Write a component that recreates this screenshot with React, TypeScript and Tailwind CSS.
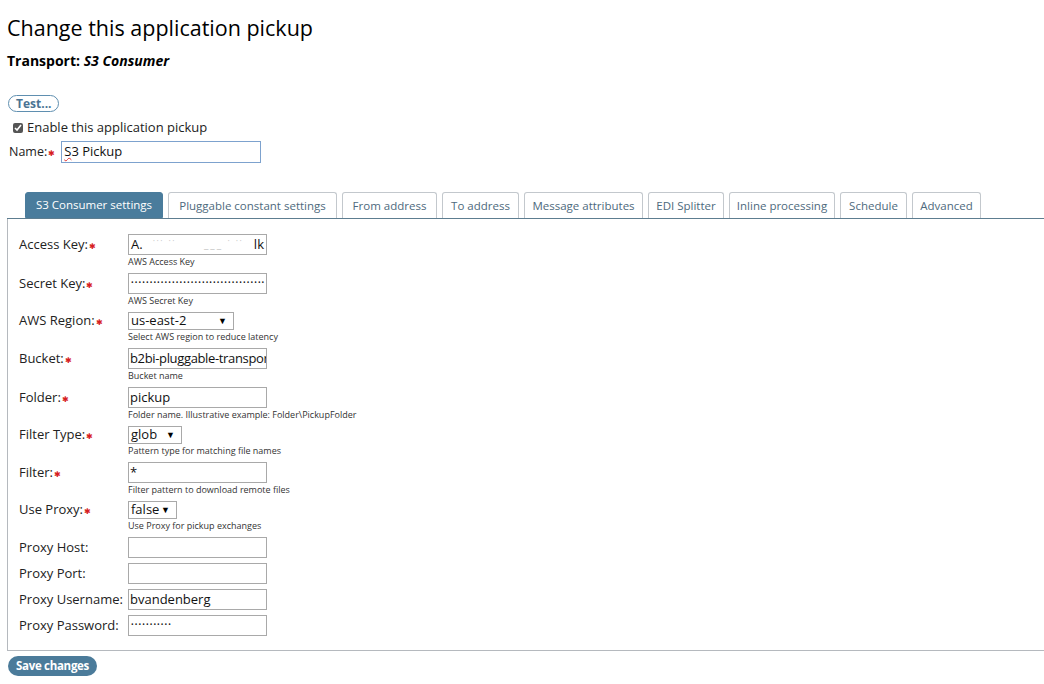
import React from "react";

const tabs: [string, string][] = [
  ["S3 Consumer settings", "w-[138px]"],
  ["Pluggable constant settings", "w-[169px]"],
  ["From address", "w-[95px]"],
  ["To address", "w-[77px]"],
  ["Message attributes", "w-[119px]"],
  ["EDI Splitter", "w-[76px]"],
  ["Inline processing", "w-[106px]"],
  ["Schedule", "w-[67px]"],
  ["Advanced", "w-[69px]"],
];

type Field = {
  label: string;
  required?: boolean;
  kind: "text" | "password" | "select" | "redacted";
  value?: string;
  width?: string;
  hint?: string;
  tight?: boolean;
};

const fields: Field[] = [
  { label: "Access Key:", required: true, kind: "redacted", hint: "AWS Access Key" },
  { label: "Secret Key:", required: true, kind: "password", value: "•".repeat(36), hint: "AWS Secret Key" },
  { label: "AWS Region:", required: true, kind: "select", value: "us-east-2", width: "w-[106px]", hint: "Select AWS region to reduce latency" },
  { label: "Bucket:", required: true, kind: "text", value: "b2bi-pluggable-transport", hint: "Bucket name", tight: true },
  { label: "Folder:", required: true, kind: "text", value: "pickup", hint: "Folder name. Illustrative example: Folder\\PickupFolder" },
  { label: "Filter Type:", required: true, kind: "select", value: "glob", width: "w-[54px]", hint: "Pattern type for matching file names" },
  { label: "Filter:", required: true, kind: "text", value: "*", hint: "Filter pattern to download remote files" },
  { label: "Use Proxy:", required: true, kind: "select", value: "false", width: "w-[49px]", hint: "Use Proxy for pickup exchanges" },
  { label: "Proxy Host:", kind: "text", value: "" },
  { label: "Proxy Port:", kind: "text", value: "" },
  { label: "Proxy Username:", kind: "text", value: "bvandenberg" },
  { label: "Proxy Password:", kind: "password", value: "•".repeat(11) },
];

function Req() {
  return <span className="ml-[1px] text-[8px] leading-none text-[#d62020] relative top-[1px]">✱</span>;
}

const box = "h-[21px] border border-[#a9a9a9] bg-white flex items-center overflow-hidden whitespace-nowrap";

function Control({ f }: { f: Field }) {
  if (f.kind === "select") {
    return (
      <div className={`${f.width} h-[18px] border border-[#a9a9a9] bg-white flex items-center justify-between pl-[2px] pr-[6px] text-[13px] text-[#111]`}>
        <span>{f.value}</span>
        <span className="text-[9px] text-black">▼</span>
      </div>
    );
  }
  if (f.kind === "redacted") {
    return (
      <div className={`w-[139px] ${box} justify-between px-[2px] text-[13px] text-[#111]`}>
        <span>A.</span>
        <span className="text-[#c4c4c4] text-[10px] tracking-[2px]">˙˙˙ ˙˙ &nbsp;&nbsp;&nbsp;&nbsp; ___ ˙ ˙˙</span>
        <span>lk</span>
      </div>
    );
  }
  if (f.kind === "password") {
    return (
      <div className={`w-[139px] ${box} px-[2px]`}>
        <span className="text-[7px] tracking-[1.1px] text-[#222]">{f.value}</span>
      </div>
    );
  }
  return (
    <div className={`w-[139px] ${box} px-[1px] text-[13px] text-[#111] ${f.tight ? "tracking-[-0.35px]" : ""}`}>
      {f.value}
    </div>
  );
}

export default function App() {
  return (
    <div className="w-[1044px] h-[684px] overflow-hidden bg-white text-[#222] font-['Open_Sans',sans-serif]">
      <div className="pl-[7px] pt-[12px]">
        <h1 className="text-[21.5px] leading-[32px] text-black whitespace-nowrap">Change this application pickup</h1>
        <div className="mt-[7px] text-[14px] font-bold text-black leading-[20px]">
          Transport: <span className="italic">S3 Consumer</span>
        </div>

        <div className="mt-[24px] ml-[1px] flex">
          <button className="h-[17px] px-[7px] rounded-full border border-[#5f8fb0] bg-white text-[12px] font-bold text-[#4a7393] leading-none">
            Test...
          </button>
        </div>

        <label className="mt-[7px] ml-[6px] h-[18px] flex items-center gap-[4px] text-[13px] text-[#222]">
          <input type="checkbox" defaultChecked className="w-[10px] h-[10px] m-0 accent-[#555]" />
          Enable this application pickup
        </label>

        <div className="mt-[4px] ml-[2px] flex items-center">
          <span className="text-[12.5px] text-[#222]">Name:</span>
          <Req />
          <div className="ml-[6px] w-[200px] h-[22px] border border-[#7da2ce] bg-white flex items-center px-[2px] text-[13px] text-[#111]">
            <span className="underline decoration-wavy decoration-[#e03030] decoration-[1px]">S</span>3 Pickup
          </div>
        </div>

        {/* tabs */}
        <div className="mt-[29px] flex items-end gap-[5px] pl-[18px] border-b border-[#5d7d90]">
          {tabs.map(([t, w], i) => (
            <div
              key={t}
              className={
                i === 0
                  ? `${w} shrink-0 h-[26px] flex items-center justify-center whitespace-nowrap rounded-t-[3px] bg-[#4a7c9c] text-white text-[11.5px] border border-[#4a7c9c]`
                  : `${w} shrink-0 h-[26px] flex items-center justify-center whitespace-nowrap rounded-t-[3px] bg-white border border-b-0 border-[#c3c8cd] text-[#4e6a7d] text-[11.5px]`
              }
            >
              {t}
            </div>
          ))}
        </div>

        {/* panel */}
        <div className="border-l border-b border-[#b5b9be] pl-[11px] pt-[15px] pb-[9px]">
          <div className="flex flex-col">
            {fields.map((f) => (
              <div key={f.label} className="flex mb-[5px]">
                <div className={`w-[109px] ${f.kind === "select" ? "h-[18px]" : "h-[21px]"} flex items-center text-[13px] text-[#222] whitespace-nowrap`}>
                  {f.label}
                  {f.required && <Req />}
                </div>
                <div className="flex flex-col">
                  <Control f={f} />
                  {f.hint && <div className="text-[9px] leading-[13px] text-[#333] whitespace-nowrap">{f.hint}</div>}
                </div>
              </div>
            ))}
          </div>
        </div>

        <div className="mt-[5px] ml-[1px] flex">
          <button className="h-[20px] px-[8px] rounded-full bg-[#4b7b9a] text-white text-[11.5px] tracking-[-0.3px] font-bold leading-none">
            Save changes
          </button>
        </div>
      </div>
    </div>
  );
}
